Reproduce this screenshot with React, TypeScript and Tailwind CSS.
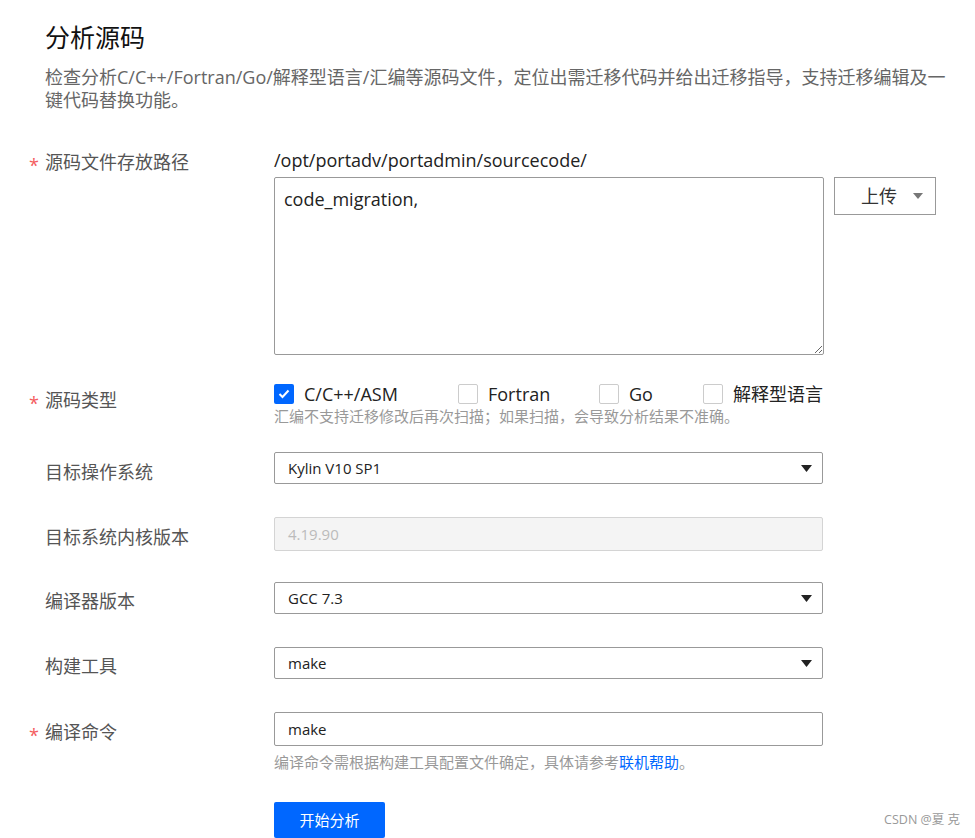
import React from "react"

const font = { fontFamily: '"Open Sans", "Noto Sans CJK SC", sans-serif' }

function Label({ text, required, className = "" }: { text: string; required?: boolean; className?: string }) {
  return (
    <div className={`flex w-[245px] shrink-0 text-[18px] leading-[24px] text-[#555] ${className}`}>
      <span className="w-[16px] pt-[3px] text-[#f45c5e]">{required ? "*" : ""}</span>
      <span>{text}</span>
    </div>
  )
}

function Caret() {
  return (
    <svg width="11" height="7" viewBox="0 0 11 7" className="mr-[10px]">
      <path d="M0 0 L11 0 L5.5 7 Z" fill="#222" />
    </svg>
  )
}

function Select({ value }: { value: string }) {
  return (
    <div className="flex h-[32px] w-[549px] items-center justify-between rounded-[2px] border border-[#999] bg-white pl-[13px] text-[15px] text-[#222]">
      <span>{value}</span>
      <Caret />
    </div>
  )
}

function Check({ label, checked, className = "" }: { label: string; checked?: boolean; className?: string }) {
  return (
    <div className={`flex items-center ${className}`}>
      {checked ? (
        <span className="flex h-[20px] w-[20px] items-center justify-center rounded-[2px] bg-[#0067ff]">
          <svg width="12" height="10" viewBox="0 0 12 10">
            <path d="M1.5 5 L4.5 8 L10.5 1.5" stroke="white" strokeWidth="2" fill="none" />
          </svg>
        </span>
      ) : (
        <span className="h-[20px] w-[20px] rounded-[2px] border border-[#ccc] bg-white" />
      )}
      <span className="ml-[10px] text-[18px] leading-[24px] text-[#222]">{label}</span>
    </div>
  )
}

export default function App() {
  return (
    <div className="relative h-[838px] w-[975px] overflow-hidden bg-white" style={font}>
      <div className="pl-[45px] pt-[21px]">
        <h1 className="text-[25px] leading-[33px] text-[#111]">分析源码</h1>
        <p className="mt-[12px] w-[905px] text-[18px] leading-[23px] text-[#666]">
          检查分析C/C++/Fortran/Go/解释型语言/汇编等源码文件，定位出需迁移代码并给出迁移指导，支持迁移编辑及一键代码替换功能。
        </p>
      </div>

      <div className="pl-[29px]">
        {/* source path */}
        <div className="mt-[36px] flex">
          <Label text="源码文件存放路径" required className="pt-[2px]" />
          <div>
            <div className="text-[18px] leading-[24px] text-[#222]">/opt/portadv/portadmin/sourcecode/</div>
            <div className="mt-[5px] flex items-start">
              <textarea
                defaultValue="code_migration,"
                className="h-[178px] w-[550px] rounded-[2px] border border-[#999] px-[9px] py-[8px] text-[18px] leading-[26px] text-[#222] outline-none"
              />
              <div className="ml-[10px] flex h-[38px] w-[102px] items-center justify-end border border-[#999] pr-[12px]">
                <span className="text-[18px] text-[#333]">上传</span>
                <svg width="10" height="6" viewBox="0 0 10 6" className="ml-[16px]">
                  <path d="M0 0 L10 0 L5 6 Z" fill="#777" />
                </svg>
              </div>
            </div>
          </div>
        </div>

        {/* source type */}
        <div className="mt-[27px] flex">
          <Label text="源码类型" required className="pt-[6px]" />
          <div>
            <div className="flex">
              <Check label="C/C++/ASM" checked className="w-[184px]" />
              <Check label="Fortran" className="w-[141px]" />
              <Check label="Go" className="w-[104px]" />
              <Check label="解释型语言" />
            </div>
            <div className="text-[15px] leading-[20px] text-[#999]">
              汇编不支持迁移修改后再次扫描；如果扫描，会导致分析结果不准确。
            </div>
          </div>
        </div>

        <div className="mt-[26px] flex">
          <Label text="目标操作系统" className="pt-[8px]" />
          <Select value="Kylin V10 SP1" />
        </div>

        <div className="mt-[33px] flex">
          <Label text="目标系统内核版本" className="pt-[8px]" />
          <div className="flex h-[34px] w-[549px] items-center rounded-[2px] border border-[#d4d4d4] bg-[#f4f4f4] pl-[13px] text-[15px] text-[#bbb]">
            4.19.90
          </div>
        </div>

        <div className="mt-[31px] flex">
          <Label text="编译器版本" className="pt-[7px]" />
          <Select value="GCC 7.3" />
        </div>

        <div className="mt-[33px] flex">
          <Label text="构建工具" className="pt-[7px]" />
          <Select value="make" />
        </div>

        <div className="mt-[33px] flex">
          <Label text="编译命令" required className="pt-[8px]" />
          <div>
            <div className="flex h-[34px] w-[549px] items-center rounded-[2px] border border-[#999] pl-[13px] text-[15px] text-[#222]">
              make
            </div>
            <div className="mt-[6px] text-[15px] leading-[20px] text-[#999]">
              编译命令需根据构建工具配置文件确定，具体请参考<span className="text-[#0067ff]">联机帮助</span>。
            </div>
            <button className="mt-[30px] h-[36px] w-[111px] rounded-[2px] bg-[#0067ff] text-[15px] text-white">
              开始分析
            </button>
          </div>
        </div>
      </div>

      <div className="absolute bottom-[8px] right-[15px] text-[12.5px] text-[#999]">CSDN @夏 克</div>
    </div>
  )
}
